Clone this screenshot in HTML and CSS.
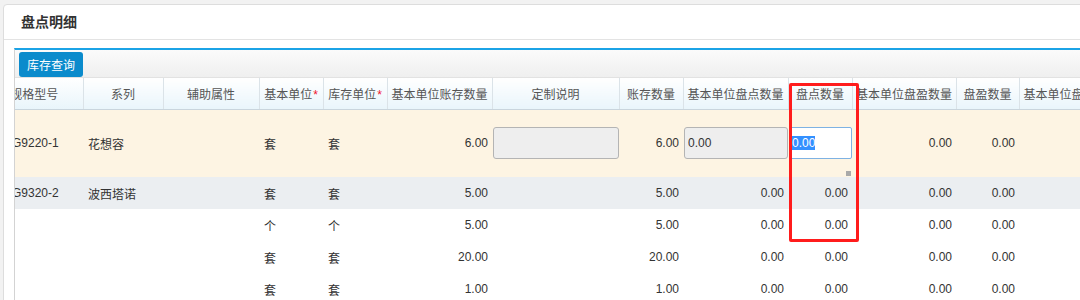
FILE: index.html
```html
<!DOCTYPE html>
<html lang="zh-CN">
<head>
  <meta charset="UTF-8" />
  <meta name="viewport" content="width=device-width, initial-scale=1.0" />
  <title>盘点明细</title>
  <link rel="stylesheet" href="styles.css">
</head>
<body>
  <div class="panel">
    <div class="panel-heading">盘点明细</div>
    <div class="panel-body">
      <div class="grid">
        <div class="toolbar">
          <button class="btn" id="stockBtn">库存查询</button>
        </div>
        <div class="grid-view">
          <table class="grid-table">
            <colgroup>
              <col style="width:97px"><col style="width:80px"><col style="width:96px">
              <col style="width:64px"><col style="width:64px"><col style="width:105px">
              <col style="width:127px"><col style="width:64px"><col style="width:105px">
              <col style="width:64px"><col style="width:104px"><col style="width:63px">
              <col style="width:105px">
            </colgroup>
            <thead>
              <tr>
                <th>规格型号</th>
                <th>系列</th>
                <th>辅助属性</th>
                <th>基本单位<span class="req">*</span></th>
                <th>库存单位<span class="req">*</span></th>
                <th>基本单位账存数量</th>
                <th>定制说明</th>
                <th>账存数量</th>
                <th>基本单位盘点数量</th>
                <th>盘点数量</th>
                <th>基本单位盘盈数量</th>
                <th>盘盈数量</th>
                <th>基本单位盘盈数量</th>
              </tr>
            </thead>
            <tbody>
              <tr class="row-edit">
                <td class="code">G9220-1</td>
                <td>花想容</td>
                <td></td>
                <td>套</td>
                <td>套</td>
                <td class="num">6.00</td>
                <td class="cell-input"><input class="field" type="text" disabled></td>
                <td class="num">6.00</td>
                <td class="cell-input"><input class="field" type="text" value="0.00" disabled></td>
                <td class="cell-input cell-active">
                  <div class="editor"><span class="sel">0.00</span></div>
                  <span class="fill-handle"></span>
                </td>
                <td class="num">0.00</td>
                <td class="num">0.00</td>
                <td class="num">0.00</td>
              </tr>
              <tr class="row-hover">
                <td class="code">G9320-2</td>
                <td>波西塔诺</td>
                <td></td>
                <td>套</td>
                <td>套</td>
                <td class="num">5.00</td>
                <td></td>
                <td class="num">5.00</td>
                <td class="num">0.00</td>
                <td class="num">0.00</td>
                <td class="num">0.00</td>
                <td class="num">0.00</td>
                <td class="num">0.00</td>
              </tr>
              <tr>
                <td class="code"></td><td></td><td></td>
                <td>个</td>
                <td>个</td>
                <td class="num">5.00</td>
                <td></td>
                <td class="num">5.00</td>
                <td class="num">0.00</td>
                <td class="num">0.00</td>
                <td class="num">0.00</td>
                <td class="num">0.00</td>
                <td class="num">0.00</td>
              </tr>
              <tr>
                <td class="code"></td><td></td><td></td>
                <td>套</td>
                <td>套</td>
                <td class="num">20.00</td>
                <td></td>
                <td class="num">20.00</td>
                <td class="num">0.00</td>
                <td class="num">0.00</td>
                <td class="num">0.00</td>
                <td class="num">0.00</td>
                <td class="num">0.00</td>
              </tr>
              <tr>
                <td class="code"></td><td></td><td></td>
                <td>套</td>
                <td>套</td>
                <td class="num">1.00</td>
                <td></td>
                <td class="num">1.00</td>
                <td class="num">0.00</td>
                <td class="num">0.00</td>
                <td class="num">0.00</td>
                <td class="num">0.00</td>
                <td class="num">0.00</td>
              </tr>
            </tbody>
          </table>
        </div>
        <!-- annotation over the 盘点数量 column -->
        <div class="mark"></div>
      </div>
    </div>
  </div>
</body>
</html>
```

FILE: styles.css
```css
:root {
  --page-bg: #f2f2f2;
  --border: #dddddd;
  --accent: #1ba3e6;
  --btn-bg: #0b8bcc;
  --text-main: #333333;
  --text-head: #555555;
  --row-edit: #fdf4e3;
  --row-hover: #ebeef1;
  --mark: #ff1c1c;
}
* { box-sizing: border-box; margin: 0; padding: 0; }
html, body { overflow: hidden; }
body {
  background: var(--page-bg);
  font-family: "Liberation Sans", "Noto Sans CJK SC", sans-serif;
  font-size: 12px;
  color: var(--text-main);
  padding: 4px 0 0 3px;
  width: 1080px;
  height: 300px;
}
.panel {
  width: 1200px;
  min-height: 320px;
  background: #fff;
  border: 1px solid var(--border);
  border-radius: 4px;
}
.panel-heading {
  height: 35px;
  line-height: 34px;
  padding-left: 17px;
  font-size: 14px;
  font-weight: bold;
  color: #333;
  border-bottom: 1px solid #e3e3e3;
}
.panel-body { padding: 8px 0 0 10px; }
.grid {
  position: relative;
  border-top: 2px solid var(--accent);
  border-left: 1px solid #d3d3d3;
}
.toolbar {
  height: 28px;
  padding: 2px 0 0 4px;
  background: linear-gradient(#fbfbfb, #efefef);
  border-bottom: 1px solid #e2e2e2;
}
.btn {
  width: 64px; height: 25px;
  background: var(--btn-bg);
  color: #fff;
  border: none;
  border-radius: 3px;
  font-family: inherit;
  font-size: 12px;
  cursor: pointer;
}
.grid-view { overflow: hidden; }
.grid-table {
  table-layout: fixed;
  border-collapse: collapse;
  margin-left: -29px;
  width: 1138px;
}
.grid-table th {
  height: 31px;
  font-weight: normal;
  color: var(--text-head);
  text-align: center;
  white-space: nowrap;
  overflow: hidden;
  background: linear-gradient(#ffffff, #e9f5fb);
  border-right: 1px solid #dbe3e8;
  border-bottom: 1px solid #c9d5dd;
}
.req { color: #f0142d; margin-left: 1px; }
.grid-table td {
  height: 32px;
  padding: 0 5px;
  white-space: nowrap;
  overflow: hidden;
  vertical-align: middle;
}
.grid-table td.code { padding-left: 26px; }
.grid-table td.num { text-align: right; padding: 0 4px 0 0; }
.row-edit td { height: 68px; background: var(--row-edit); }
.row-hover td { background: var(--row-hover); }
.grid-table td.cell-input { padding: 0 0 0 1px; }
.field {
  display: block;
  width: 100%; height: 32px;
  padding: 0 3px;
  background: #eeeeee;
  border: 1px solid #b4b4b4;
  border-radius: 3px;
  font-family: inherit;
  font-size: 12px;
  color: var(--text-main);
}
.cell-active { position: relative; overflow: visible; }
.editor {
  height: 32px;
  line-height: 30px;
  padding-left: 2px;
  background: #fff;
  border: 1px solid #7eb2e3;
  border-radius: 2px;
}
.sel { background: #3390ff; color: #fff; }
.fill-handle {
  position: absolute;
  right: 1px; bottom: 1px;
  width: 5px; height: 5px;
  background: #a9a9a9;
}
.mark {
  position: absolute;
  left: 774px; top: 33px;
  width: 70px; height: 159px;
  border: 3px solid var(--mark);
  border-radius: 2px;
}
```
